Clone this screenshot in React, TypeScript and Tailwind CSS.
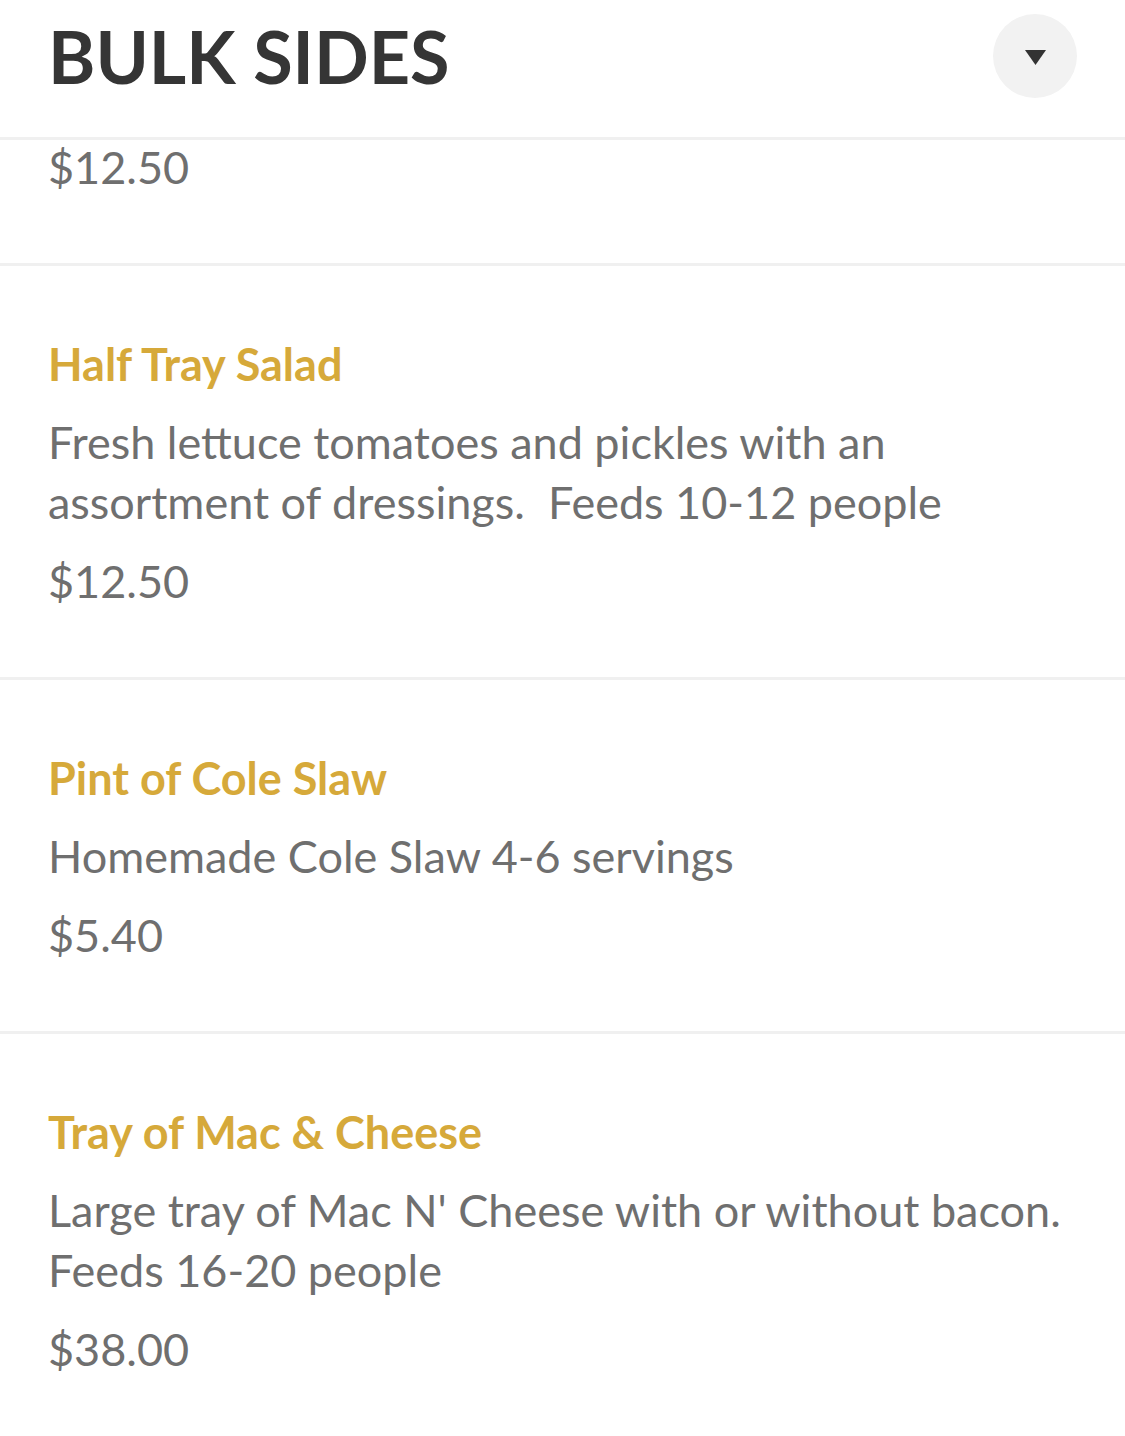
import React from "react";

type Item = {
  name?: string;
  description?: string;
  price: string;
};

const items: Item[] = [
  { price: "$12.50" },
  {
    name: "Half Tray Salad",
    description: "Fresh lettuce tomatoes and pickles with an assortment of dressings.  Feeds 10-12 people",
    price: "$12.50",
  },
  {
    name: "Pint of Cole Slaw",
    description: "Homemade Cole Slaw 4-6 servings",
    price: "$5.40",
  },
  {
    name: "Tray of Mac & Cheese",
    description: "Large tray of Mac N' Cheese with or without bacon. Feeds 16-20 people",
    price: "$38.00",
  },
];

function MenuItem({ item, first }: { item: Item; first?: boolean }) {
  return (
    <div
      className={`pl-[48px] pr-[50px] pb-[66px] border-b-[3px] border-[#f0f0f0] ${
        first ? "-mt-[3px]" : "pt-[68px]"
      }`}
    >
      {item.name && (
        <h3 className="text-[45px] leading-[60px] font-bold text-[#d6a93a]">{item.name}</h3>
      )}
      {item.description && (
        <p className="mt-[18px] text-[45px] leading-[60px] text-[#6f6f6f] whitespace-pre-wrap">
          {item.description}
        </p>
      )}
      <div className={`${first ? "" : "mt-[19px]"} text-[45px] leading-[60px] text-[#6f6f6f]`}>
        {item.price}
      </div>
    </div>
  );
}

export default function App() {
  return (
    <div className="w-[1125px] h-[1436px] overflow-hidden bg-white font-['Lato',sans-serif]">
      <div className="relative z-10 bg-white flex items-center justify-between pl-[48px] pr-[48px] pt-[14px] pb-[39px] border-b-[3px] border-[#f0f0f0]">
        <h2 className="text-[72px] leading-[72px] font-bold text-[#353535]">BULK SIDES</h2>
        <button className="w-[84px] h-[84px] rounded-full bg-[#f2f2f2] flex items-center justify-center">
          <svg width="21" height="15" viewBox="0 0 21 15" className="mt-[2px]">
            <polygon points="0,0 21,0 10.5,15" fill="#333333" />
          </svg>
        </button>
      </div>
      <div>
        {items.map((item, i) => (
          <MenuItem key={i} item={item} first={i === 0} />
        ))}
      </div>
    </div>
  );
}
